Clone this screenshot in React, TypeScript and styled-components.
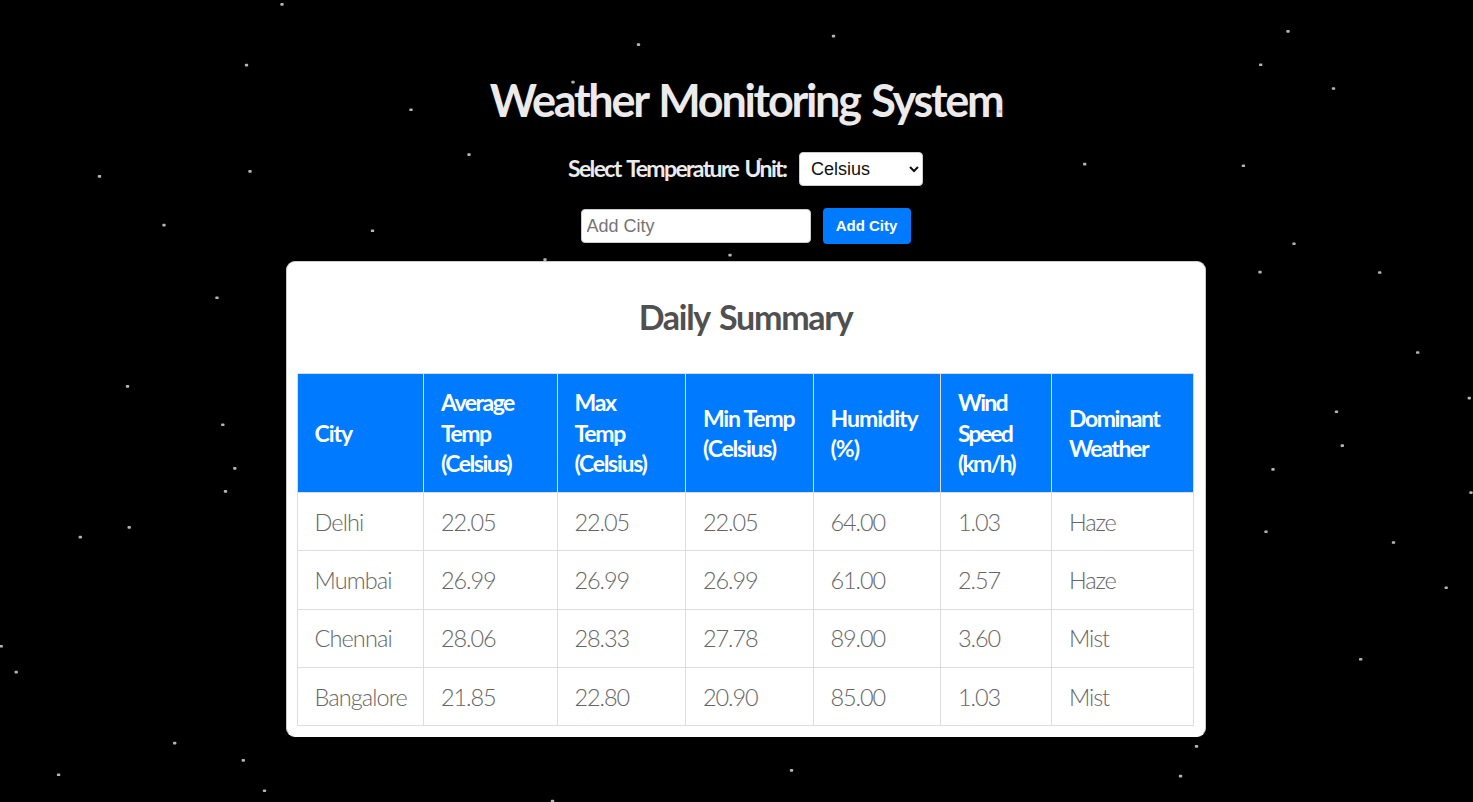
import React from "react";
import styled, { createGlobalStyle } from "styled-components";

const script = `Lato, "Open Sans", "Liberation Sans", sans-serif`;
const sans = `"Liberation Sans", Arial, sans-serif`;

const GlobalStyle = createGlobalStyle`
  * { box-sizing: border-box; }
  html, body { margin: 0; background: #000; }
  body { font-family: ${script}; overflow: hidden; }
`;

const Page = styled.div`
  position: relative;
  height: 802px;
  padding: 68px 0 0 18px;
  display: flex;
  flex-direction: column;
  align-items: center;
  overflow: hidden;
`;

const StarField = styled.svg`
  position: absolute;
  inset: 0;
  width: 1473px;
  height: 802px;
  pointer-events: none;
`;

const Title = styled.h1`
  margin: 0;
  height: 84px;
  padding-left: 1px;
  color: #eceaea;
  font-size: 45px;
  line-height: 64px;
  font-weight: 700;
  letter-spacing: -2.3px;
  word-spacing: 3px;
  white-space: nowrap;
`;

const Controls = styled.div<{ $gap: number; $bottom: number }>`
  display: flex;
  align-items: center;
  gap: ${(p) => p.$gap}px;
  margin-bottom: ${(p) => p.$bottom}px;
`;

const UnitLabel = styled.label`
  width: 220px;
  padding-bottom: 2px;
  color: #eceaea;
  font-size: 23px;
  line-height: 30px;
  font-weight: 700;
  letter-spacing: -1.65px;
  word-spacing: 2.5px;
  white-space: nowrap;
`;

const UnitSelect = styled.select`
  width: 124px;
  height: 34px;
  padding: 0 0 0 7px;
  border: 1px solid #ccc;
  border-radius: 4px;
  background-color: #fff;
  color: #111;
  font: 18px ${sans};
`;

const CityInput = styled.input`
  width: 230px;
  height: 34px;
  padding: 0 5px;
  border: 1px solid #ccc;
  border-radius: 4px;
  background: #fff;
  font: 18px ${sans};
  &::placeholder { color: #757575; }
`;

const AddButton = styled.button`
  width: 88px;
  height: 36px;
  padding: 0 0 2px;
  border: 0;
  border-radius: 4px;
  background: #007bff;
  color: #fff;
  font: bold 15px ${sans};
`;

const Card = styled.section`
  position: relative;
  width: 920px;
  height: 476px;
  padding: 0 10px;
  border: 1px solid #ccc;
  border-bottom-color: #fff;
  border-radius: 9px;
  background: #fff;
`;

const CardTitle = styled.h2`
  margin: 0;
  padding-top: 33px;
  height: 111px;
  color: #505050;
  text-align: center;
  font-size: 34px;
  line-height: 44px;
  font-weight: 700;
  letter-spacing: -1.3px;
  word-spacing: 3px;
`;

const Table = styled.table`
  width: 897px;
  table-layout: fixed;
  border-collapse: collapse;
`;

const HeadCell = styled.th<{ $spacing: number }>`
  height: 119px;
  padding: 0 0 0 17px;
  border: 1px solid #ddd;
  background: #007bff;
  color: #fff;
  text-align: left;
  font-size: 23px;
  line-height: 30.4px;
  font-weight: 700;
  letter-spacing: ${(p) => p.$spacing}px;
  white-space: pre-line;
`;

const Cell = styled.td<{ $spacing: number }>`
  height: 58.3px;
  padding: 0 0 0 17px;
  border: 1px solid #ddd;
  color: #666;
  font-size: 23.5px;
  line-height: 30px;
  font-weight: 300;
  letter-spacing: ${(p) => p.$spacing}px;
  white-space: nowrap;
`;

const columns = [
  { label: "City", width: 126.5, spacing: -1 },
  { label: "Average\nTemp\n(Celsius)", width: 133.5, spacing: -1.5 },
  { label: "Max\nTemp\n(Celsius)", width: 128.5, spacing: -1.3 },
  { label: "Min Temp\n(Celsius)", width: 127.5, spacing: -1.2 },
  { label: "Humidity\n(%)", width: 127.5, spacing: -1 },
  { label: "Wind\nSpeed\n(km/h)", width: 111, spacing: -1.8 },
  { label: "Dominant\nWeather", width: 141.5, spacing: -1.4 },
];

const rows = [
  ["Delhi", "22.05", "22.05", "22.05", "64.00", "1.03", "Haze"],
  ["Mumbai", "26.99", "26.99", "26.99", "61.00", "2.57", "Haze"],
  ["Chennai", "28.06", "28.33", "27.78", "89.00", "3.60", "Mist"],
  ["Bangalore", "21.85", "22.80", "20.90", "85.00", "1.03", "Mist"],
];

const stars = [
  [282, 4.3], [246.5, 65], [411, 109.7], [469, 154.5], [250, 171.3], [99.5, 176.3],
  [164, 225], [372.5, 230.7], [217, 297.7], [127.5, 386.3], [222.8, 424.7],
  [234.8, 468.3], [225.5, 491.3], [129.2, 527.3], [80.3, 537], [1.2, 646.2],
  [16.2, 672], [174.7, 743], [243.3, 760.3], [58.6, 774.7], [264.5, 790.6],
  [1288, 31.3], [1260.7, 64.7], [1333.5, 88.4], [1000, 111.3], [1084.7, 164],
  [1243.4, 165.7], [1294, 243.6], [1260, 272], [1379.7, 272.4], [1417.7, 352.4],
  [1469.3, 398], [1336.5, 411.6], [1342.3, 445.5], [1273, 469.3], [1471, 492.5],
  [1266, 531.6], [1393.5, 542.4], [1446.2, 587.6], [1360.7, 659.2], [791.5, 770.3],
  [552.5, 801], [638.5, 44.5], [833.5, 36], [573, 82], [760, 159.3], [545, 259.5],
  [730, 255], [1196.5, 746.3], [1180.5, 776],
];

export default function App() {
  return (
    <Page>
      <GlobalStyle />
      <StarField viewBox="0 0 1473 802" aria-hidden="true">
        {stars.map(([x, y]) => (
          <rect key={`${x}-${y}`} x={x - 1.7} y={y - 1.2} width={3.4} height={2.6} rx={0.9} fill="#b4b4b4" />
        ))}
      </StarField>
      <Title>Weather Monitoring System</Title>
      <Controls $gap={11} $bottom={22}>
        <UnitLabel htmlFor="unit">Select Temperature Unit:</UnitLabel>
        <UnitSelect id="unit" defaultValue="Celsius">
          <option>Celsius</option>
          <option>Fahrenheit</option>
          <option>Kelvin</option>
        </UnitSelect>
      </Controls>
      <Controls $gap={12} $bottom={17}>
        <CityInput placeholder="Add City" />
        <AddButton type="button">Add City</AddButton>
      </Controls>
      <Card>
        <CardTitle>Daily Summary</CardTitle>
        <Table>
          <colgroup>
            {columns.map((c) => (
              <col key={c.label} width={c.width} />
            ))}
          </colgroup>
          <thead>
            <tr>
              {columns.map((c) => (
                <HeadCell key={c.label} $spacing={c.spacing}>{c.label}</HeadCell>
              ))}
            </tr>
          </thead>
          <tbody>
            {rows.map((row) => (
              <tr key={row[0]}>
                {row.map((value, i) => (
                  <Cell key={i} $spacing={i === 0 ? -0.9 : -1.1}>{value}</Cell>
                ))}
              </tr>
            ))}
          </tbody>
        </Table>
      </Card>
    </Page>
  );
}
